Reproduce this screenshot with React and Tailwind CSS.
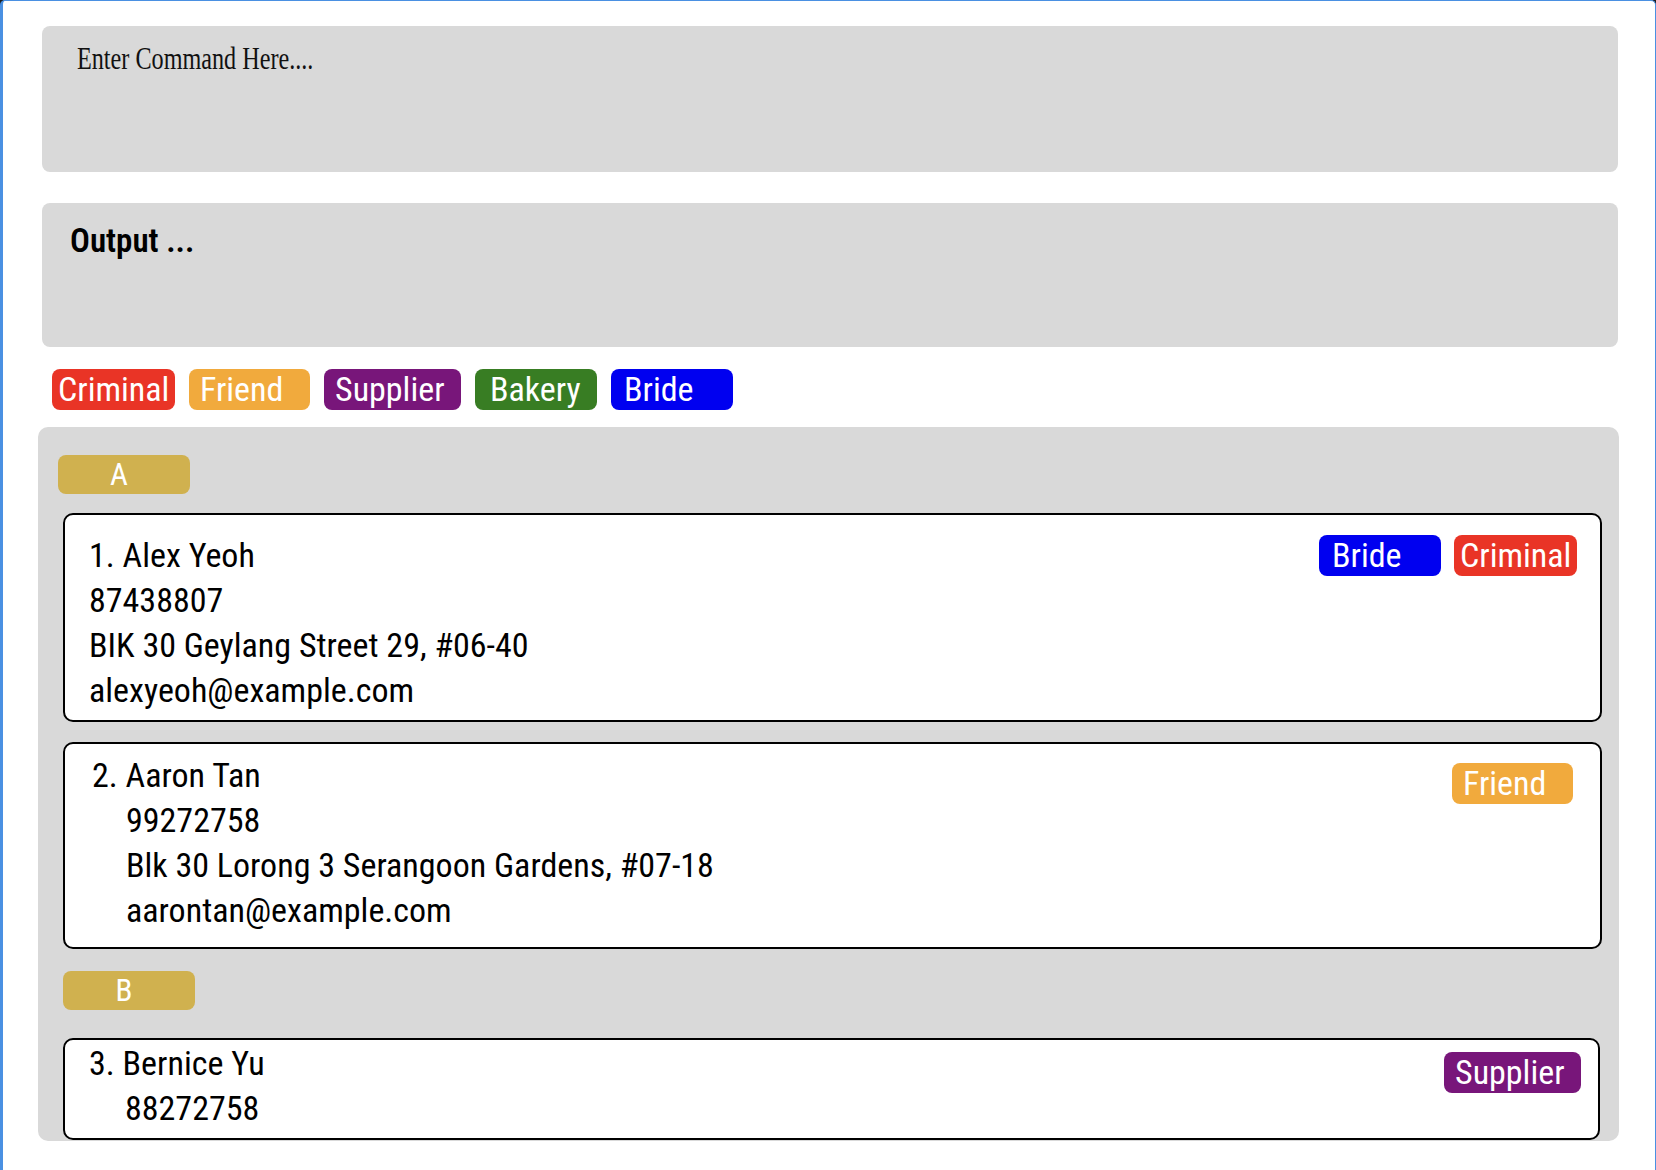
const TAG_STYLES = {
  Criminal: 'bg-[#e93426] w-[123px] pl-[6px]',
  Friend: 'bg-[#f1aa3d] w-[121px] pl-[11px]',
  Supplier: 'bg-[#78167a] w-[137px] pl-[11px]',
  Bakery: 'bg-[#387d23] w-[122px] pl-[15px]',
  Bride: 'bg-[#0000f0] w-[122px] pl-[13px]',
};

const font = "font-['Roboto_Condensed','Liberation_Sans',sans-serif]";

const Tag = ({ name }) => (
  <span
    className={`${TAG_STYLES[name]} ${font} inline-block h-[41px] shrink-0 overflow-hidden whitespace-nowrap rounded-[8px] text-left text-[34px] leading-[41px] text-white`}
  >
    {name}
  </span>
);

const GroupLabel = ({ letter, className }) => (
  <div
    className={`${font} flex h-[39px] w-[132px] items-center justify-center rounded-[8px] bg-[#d0b14f] pr-[10px] text-[31px] leading-none text-white ${className}`}
  >
    {letter}
  </div>
);

const App = () => {
  return (
    <div className="h-[1170px] w-full bg-[#1d1d1d]">
      <div className="flex h-full flex-col overflow-hidden rounded-t-[5px] border-t border-r border-l-[3px] border-[#4a90e2] bg-white pl-[39px] pr-[37px]">
        {/* command box */}
        <div className="mt-[25px] h-[146px] shrink-0 rounded-[8px] bg-[#d9d9d9] pl-[35px] pt-[17px]">
          <span className="inline-block origin-left scale-x-[0.78] font-['Liberation_Serif',serif] text-[31px] leading-none whitespace-nowrap text-[#111]">
            Enter Command Here....
          </span>
        </div>

        {/* output box */}
        <div
          className={`${font} mt-[31px] h-[144px] shrink-0 rounded-[8px] bg-[#d9d9d9] pl-[28px] pt-[15px] text-[33px] font-semibold leading-[45px] text-black`}
        >
          Output ...
        </div>

        {/* tag legend */}
        <div className="mt-[22px] flex shrink-0 gap-[14px] pl-[10px]">
          {['Criminal', 'Friend', 'Supplier', 'Bakery', 'Bride'].map((t) => (
            <Tag key={t} name={t} />
          ))}
        </div>

        {/* contact list */}
        <div
          className={`${font} ml-[-4px] mr-[-1px] mt-[17px] h-[714px] shrink-0 overflow-hidden rounded-[10px] bg-[#d9d9d9] text-[34px] leading-[45px] text-black`}
        >
          <GroupLabel letter="A" className="ml-[20px] mt-[28px]" />

          <div className="ml-[25px] mt-[19px] flex h-[209px] w-[1539px] justify-between rounded-[10px] border-2 border-black bg-white pl-[24px] pr-[23px] pt-[18px]">
            <div>
              <div>1. Alex Yeoh</div>
              <div>87438807</div>
              <div>BIK 30 Geylang Street 29, #06-40</div>
              <div>alexyeoh@example.com</div>
            </div>
            <div className="flex items-start gap-[13px] pt-[2px]">
              <Tag name="Bride" />
              <Tag name="Criminal" />
            </div>
          </div>

          <div className="ml-[25px] mt-[20px] flex h-[207px] w-[1539px] justify-between rounded-[10px] border-2 border-black bg-white pl-[27px] pr-[27px] pt-[9px]">
            <div>
              <div>2. Aaron Tan</div>
              <div className="pl-[34px]">
                <div>99272758</div>
                <div>Blk 30 Lorong 3 Serangoon Gardens, #07-18</div>
                <div>aarontan@example.com</div>
              </div>
            </div>
            <div className="pt-[10px]">
              <Tag name="Friend" />
            </div>
          </div>

          <GroupLabel letter="B" className="ml-[25px] mt-[22px] w-[131px]" />

          <div className="ml-[25px] mt-[28px] flex h-[102px] w-[1537px] justify-between overflow-hidden rounded-[10px] border-2 border-black bg-white pl-[24px] pr-[17px] pt-[1px]">
            <div>
              <div>3. Bernice Yu</div>
              <div className="pl-[36px]">88272758</div>
            </div>
            <div className="pt-[11px]">
              <Tag name="Supplier" />
            </div>
          </div>
        </div>
      </div>
    </div>
  );
};

export default App;
